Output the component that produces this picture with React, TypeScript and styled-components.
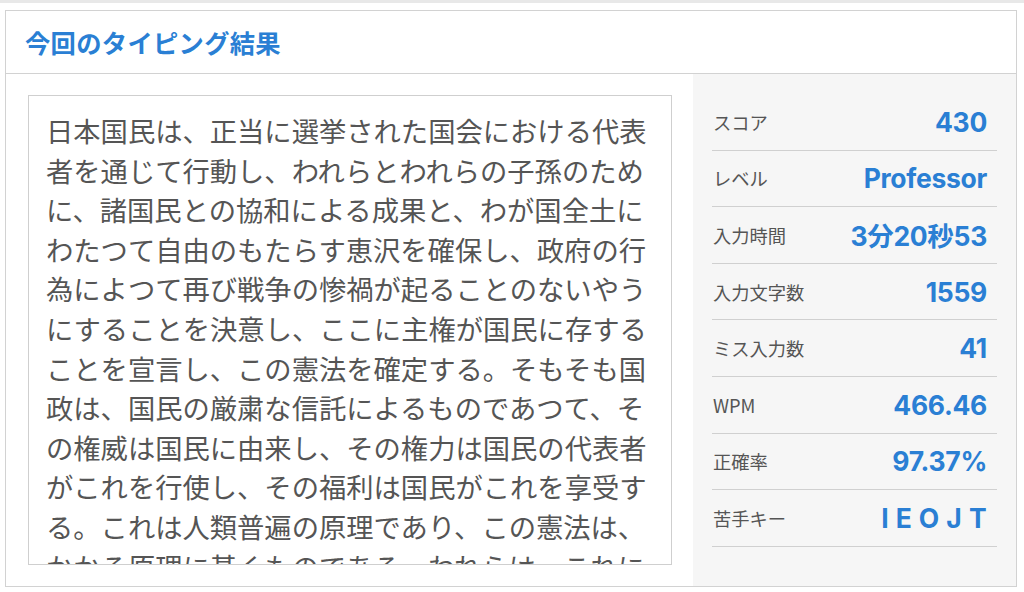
import React from "react";
import styled, { createGlobalStyle } from "styled-components";

const GlobalStyle = createGlobalStyle`
  html, body {
    margin: 0;
    padding: 0;
    background: #fff;
  }
  body {
    font-family: "Noto Sans CJK JP", "Liberation Sans", sans-serif;
    color: #555;
  }
`;

const sentence =
  "日本国民は、正当に選挙された国会における代表者を通じて行動し、われらとわれらの子孫のために、諸国民との協和による成果と、わが国全土にわたつて自由のもたらす恵沢を確保し、政府の行為によつて再び戦争の惨禍が起ることのないやうにすることを決意し、ここに主権が国民に存することを宣言し、この憲法を確定する。そもそも国政は、国民の厳粛な信託によるものであつて、その権威は国民に由来し、その権力は国民の代表者がこれを行使し、その福利は国民がこれを享受する。これは人類普遍の原理であり、この憲法は、かかる原理に基くものである。われらは、これに反する一切の憲法、法令及び詔勅を排除する。";

const stats = [
  { label: "スコア", value: "430" },
  { label: "レベル", value: "Professor" },
  { label: "入力時間", value: "3分20秒53" },
  { label: "入力文字数", value: "1559" },
  { label: "ミス入力数", value: "41" },
  { label: "WPM", value: "466.46" },
  { label: "正確率", value: "97.37%" },
  { label: "苦手キー", value: "I E O J T", spaced: true },
];

export default function App() {
  return (
    <>
      <GlobalStyle />
      <TopBand />
      <Page>
        <Card>
          <CardHeader>
            <Title>今回のタイピング結果</Title>
          </CardHeader>
          <CardBody>
            <TextArea>
              <Passage>{sentence}</Passage>
            </TextArea>
            <StatsPanel>
              {stats.map((s) => (
                <StatRow key={s.label}>
                  <StatLabel>{s.label}</StatLabel>
                  <StatValue spaced={s.spaced}>{s.value}</StatValue>
                </StatRow>
              ))}
            </StatsPanel>
          </CardBody>
        </Card>
      </Page>
    </>
  );
}

const TopBand = styled.div`
  height: 3px;
  background: #e8e8e8;
`;

const Page = styled.div`
  padding: 7px 7px 0 5px;
`;

const Card = styled.section`
  width: 1012px;
  height: 577px;
  box-sizing: border-box;
  border: 1px solid #d2d2d2;
  display: flex;
  flex-direction: column;
`;

const CardHeader = styled.header`
  height: 63px;
  box-sizing: border-box;
  border-bottom: 1px solid #d2d2d2;
  display: flex;
  align-items: center;
  padding: 0 19px;
`;

const Title = styled.h2`
  margin: 0;
  font-size: 25.3px;
  font-weight: 700;
  color: #2a7fd4;
  letter-spacing: 0.3px;
`;

const CardBody = styled.div`
  flex: 1;
  display: flex;
  min-height: 0;
`;

const TextArea = styled.div`
  width: 644px;
  margin: 21px 21px 21px 22px;
  box-sizing: border-box;
  border: 1px solid #cfcfcf;
  padding: 15px 20px 0 17px;
  overflow: hidden;
  background: #fff;
`;

const Passage = styled.p`
  margin: 0;
  font-size: 27.3px;
  line-height: 39.6px;
  color: #555;
  line-break: strict;
`;

const StatsPanel = styled.aside`
  flex: 1;
  background: #f6f6f6;
  padding: 20px 19px 0 19px;
  display: flex;
  flex-direction: column;
`;

const StatRow = styled.div`
  height: 56.6px;
  box-sizing: border-box;
  border-bottom: 1px solid #d0d0d0;
  display: flex;
  align-items: center;
  justify-content: space-between;
  padding: 0 10px 0 1px;
`;

const StatLabel = styled.span`
  font-size: 18.3px;
  color: #555;
`;

const StatValue = styled.span<{ spaced?: boolean }>`
  font-family: Inter, "Noto Sans CJK JP", sans-serif;
  font-size: 26.5px;
  font-weight: 700;
  color: #2a7fd4;
  white-space: pre;
  letter-spacing: ${(p) => (p.spaced ? "0.4px" : "-0.3px")};
`;
